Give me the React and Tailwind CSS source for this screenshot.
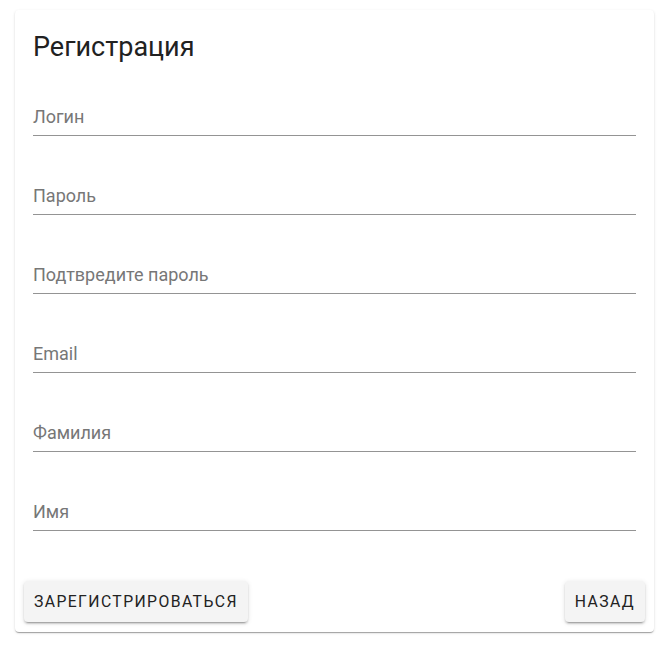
const fields = ["Логин", "Пароль", "Подтвредите пароль", "Email", "Фамилия", "Имя"];

const Field = ({ label }) => {
    return (
        <div className="pb-[5px] border-b border-[#949494]">
            <span className="block text-[18px] leading-[27px] text-[#777]">{label}</span>
        </div>
    );
};

const ActionButton = ({ children }) => {
    return (
        <button
            type="button"
            className="h-[41px] px-[10px] rounded-[4px] bg-[#f4f4f4] text-[15.75px] font-normal tracking-[1.4px] uppercase text-[#222] shadow-[0_3px_1px_-2px_rgba(0,0,0,0.2),0_2px_2px_0_rgba(0,0,0,0.14),0_1px_5px_0_rgba(0,0,0,0.12)]"
        >
            {children}
        </button>
    );
};

const App = () => {
    return (
        <div className="min-h-screen bg-white pt-[10px] pl-[15px] font-['Roboto',sans-serif]">
            <div className="w-[639px] rounded-[4px] bg-white shadow-[0_2px_1px_-1px_rgba(0,0,0,0.2),0_1px_1px_0_rgba(0,0,0,0.14),0_1px_3px_0_rgba(0,0,0,0.12)]">
                <div className="px-[18px] pt-[19px]">
                    <h2 className="text-[27px] leading-[36px] font-normal text-[#212121]">Регистрация</h2>
                    <div className="mt-[38px] flex flex-col gap-[46px]">
                        {fields.map((f) => (
                            <Field key={f} label={f} />
                        ))}
                    </div>
                </div>
                <div className="flex justify-between px-[9px] pt-[50px] pb-[10px]">
                    <ActionButton>Зарегистрироваться</ActionButton>
                    <ActionButton>Назад</ActionButton>
                </div>
            </div>
        </div>
    );
};

export default App;
